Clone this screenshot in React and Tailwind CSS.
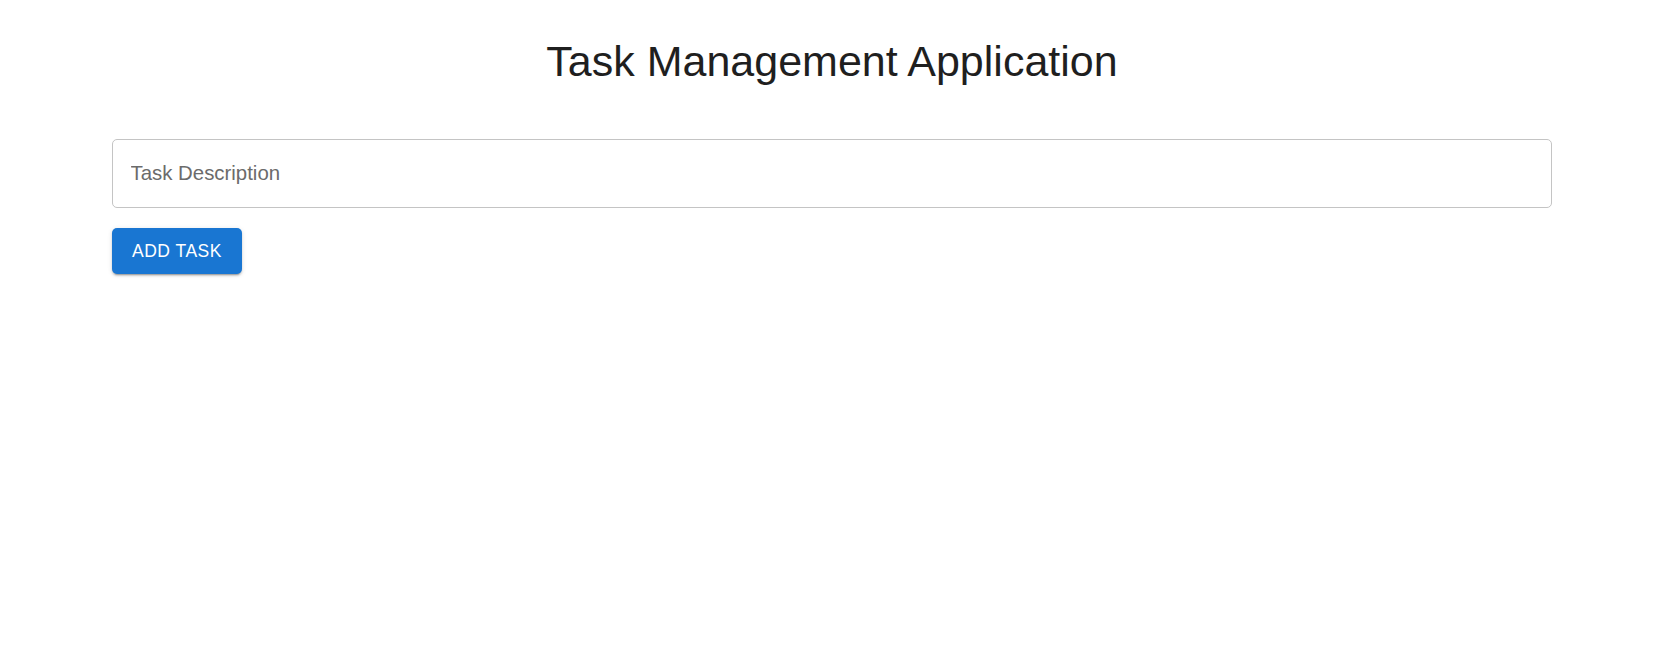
import { useState } from 'react'

export default function App() {
  const [task, setTask] = useState('')

  return (
    <div className="min-h-[665px] bg-white font-['Liberation_Sans',Arial,sans-serif]">
      <div className="w-[1664px] px-[112px] pt-[35px]">
        {/* Heading */}
        <h1 className="text-center text-[43px] leading-[53px] font-normal text-[#1f1f1f]">
          Task Management Application
        </h1>

        {/* Task form */}
        <div className="mt-[51px]">
          <input
            type="text"
            value={task}
            onChange={(e) => setTask(e.target.value)}
            placeholder="Task Description"
            className="w-full h-[69px] px-[17.5px] text-[20.4px] text-[#1f1f1f] border border-[#c4c4c4] rounded-[5px] placeholder:text-[#6b6b6b] focus:outline-none"
          />
          <button
            type="button"
            onClick={() => setTask('')}
            className="mt-[20px] h-[46px] px-[20px] bg-[#1976d2] text-white text-[17.5px] tracking-[0.5px] uppercase rounded-[5px] shadow-[0_3px_1px_-2px_rgba(0,0,0,0.2),0_2px_2px_0_rgba(0,0,0,0.14),0_1px_5px_0_rgba(0,0,0,0.12)]"
          >
            Add Task
          </button>
        </div>
      </div>
    </div>
  )
}
